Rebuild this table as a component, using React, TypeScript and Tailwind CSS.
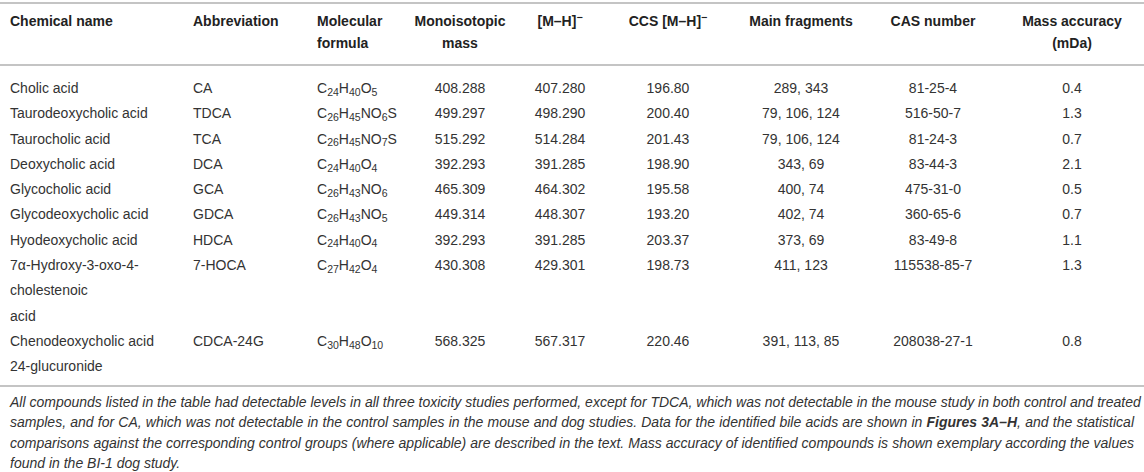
import React from "react";

type Row = {
  name: React.ReactNode;
  abbr: string;
  formula: string;
  mono: string;
  mh: string;
  ccs: string;
  frags: string;
  cas: string;
  acc: string;
};

const rows: Row[] = [
  { name: "Cholic acid", abbr: "CA", formula: "C24H40O5", mono: "408.288", mh: "407.280", ccs: "196.80", frags: "289, 343", cas: "81-25-4", acc: "0.4" },
  { name: "Taurodeoxycholic acid", abbr: "TDCA", formula: "C26H45NO6S", mono: "499.297", mh: "498.290", ccs: "200.40", frags: "79, 106, 124", cas: "516-50-7", acc: "1.3" },
  { name: "Taurocholic acid", abbr: "TCA", formula: "C26H45NO7S", mono: "515.292", mh: "514.284", ccs: "201.43", frags: "79, 106, 124", cas: "81-24-3", acc: "0.7" },
  { name: "Deoxycholic acid", abbr: "DCA", formula: "C24H40O4", mono: "392.293", mh: "391.285", ccs: "198.90", frags: "343, 69", cas: "83-44-3", acc: "2.1" },
  { name: "Glycocholic acid", abbr: "GCA", formula: "C26H43NO6", mono: "465.309", mh: "464.302", ccs: "195.58", frags: "400, 74", cas: "475-31-0", acc: "0.5" },
  { name: "Glycodeoxycholic acid", abbr: "GDCA", formula: "C26H43NO5", mono: "449.314", mh: "448.307", ccs: "193.20", frags: "402, 74", cas: "360-65-6", acc: "0.7" },
  { name: "Hyodeoxycholic acid", abbr: "HDCA", formula: "C24H40O4", mono: "392.293", mh: "391.285", ccs: "203.37", frags: "373, 69", cas: "83-49-8", acc: "1.1" },
  {
    name: (
      <>
        7α-Hydroxy-3-oxo-4-
        <br />
        cholestenoic
        <br />
        acid
      </>
    ),
    abbr: "7-HOCA", formula: "C27H42O4", mono: "430.308", mh: "429.301", ccs: "198.73", frags: "411, 123", cas: "115538-85-7", acc: "1.3",
  },
  {
    name: (
      <>
        Chenodeoxycholic acid
        <br />
        24-glucuronide
      </>
    ),
    abbr: "CDCA-24G", formula: "C30H48O10", mono: "568.325", mh: "567.317", ccs: "220.46", frags: "391, 113, 85", cas: "208038-27-1", acc: "0.8",
  },
];

const Formula = ({ f }: { f: string }) => {
  const parts = [...f.matchAll(/([A-Z][a-z]?)(\d*)/g)];
  return (
    <>
      {parts.map((p, i) => (
        <React.Fragment key={i}>
          {p[1]}
          {p[2] && <sub>{p[2]}</sub>}
        </React.Fragment>
      ))}
    </>
  );
};

const grid =
  "grid grid-cols-[183px_124px_103px_100px_100px_116px_150px_114px_1fr]";

const Line = ({ children }: { children: React.ReactNode }) => (
  <div className="whitespace-nowrap text-justify [text-align-last:justify]">{children}</div>
);

export default function App() {
  return (
    <div className="w-[1144px] h-[472px] bg-white pt-[2px] text-[#333] font-['Liberation_Sans',Arial,sans-serif] overflow-hidden">
      {/* header */}
      <div className={`${grid} border-t-2 border-b-2 border-[#c4c4c4] pt-[7px] pb-[10px] text-[14px] leading-[21.5px] font-bold text-[#222]`}>
        <div className="pl-[10px]">Chemical name</div>
        <div className="pl-[10px]">Abbreviation</div>
        <div className="pl-[10px]">
          Molecular
          <br />
          formula
        </div>
        <div className="text-center">
          Monoisotopic
          <br />
          mass
        </div>
        <div className="text-center">
          [M–H]<sup>−</sup>
        </div>
        <div className="text-center">
          CCS [M–H]<sup>−</sup>
        </div>
        <div className="text-center">Main fragments</div>
        <div className="text-center">CAS number</div>
        <div className="pl-[10px] text-center">
          Mass accuracy
          <br />
          (mDa)
        </div>
      </div>

      {/* body */}
      <div className="border-b-2 border-[#c4c4c4] pt-[10px] pb-[5px] text-[14px] leading-[25.3px]">
        {rows.map((r, i) => (
          <div key={i} className={grid}>
            <div className="pl-[10px]">{r.name}</div>
            <div className="pl-[10px]">{r.abbr}</div>
            <div className="pl-[10px]">
              <Formula f={r.formula} />
            </div>
            <div className="text-center">{r.mono}</div>
            <div className="text-center">{r.mh}</div>
            <div className="text-center">{r.ccs}</div>
            <div className="text-center">{r.frags}</div>
            <div className="text-center">{r.cas}</div>
            <div className="pl-[10px] text-center">{r.acc}</div>
          </div>
        ))}
      </div>

      {/* footnote */}
      <div className="px-[10px] pt-[5px] text-[14px] leading-[20.6px] italic">
        <Line>
          All compounds listed in the table had detectable levels in all three toxicity studies performed, except for
          TDCA, which was not detectable in the mouse study in both control and treated
        </Line>
        <Line>
          samples, and for CA, which was not detectable in the control samples in the mouse and dog studies. Data for the
          identified bile acids are shown in <b>Figures 3A–H</b>, and the statistical
        </Line>
        <Line>
          comparisons against the corresponding control groups (where applicable) are described in the text. Mass
          accuracy of identified compounds is shown exemplary according the values
        </Line>
        <div>found in the BI-1 dog study.</div>
      </div>
    </div>
  );
}
